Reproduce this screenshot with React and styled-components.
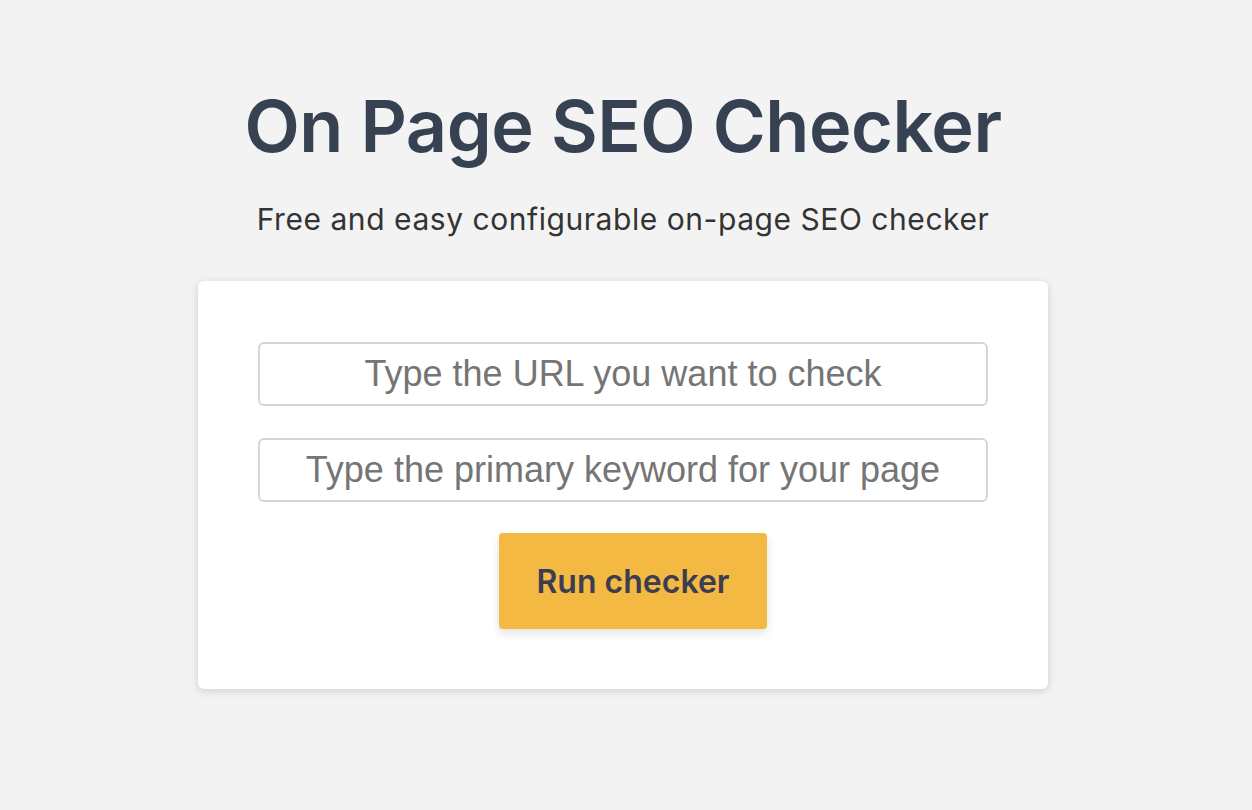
import React from "react";
import styled, { createGlobalStyle } from "styled-components";

const GlobalStyle = createGlobalStyle`
  html, body {
    margin: 0;
    padding: 0;
    background: #f3f3f3;
  }
  body {
    font-family: Inter, "Noto Sans", sans-serif;
  }
`;

const Page = styled.main`
  display: flex;
  flex-direction: column;
  align-items: center;
  padding: 82px 6px 0 0;
  min-height: 810px;
  box-sizing: border-box;
`;

const Title = styled.h1`
  margin: 0;
  font-size: 72px;
  font-weight: 600;
  color: #364152;
  letter-spacing: -0.5px;
`;

const Subtitle = styled.p`
  margin: 32px 0 0;
  font-size: 30px;
  font-weight: 400;
  letter-spacing: 0.55px;
  color: #333;
`;

const Card = styled.form`
  margin-top: 44px;
  width: 850px;
  box-sizing: border-box;
  padding: 61px 60px 60px;
  background: #fff;
  border-radius: 6px;
  box-shadow: 0 2px 8px rgba(0, 0, 0, 0.15);
  display: flex;
  flex-direction: column;
  align-items: center;
  gap: 32px;
`;

const Field = styled.input`
  width: 100%;
  height: 64px;
  box-sizing: border-box;
  border: 2px solid #d6d6d6;
  border-radius: 6px;
  font-family: "Liberation Sans", Arial, sans-serif;
  font-size: 36px;
  text-align: center;
  color: #333;
  outline: none;

  &::placeholder {
    color: #757575;
  }
`;

const RunButton = styled.button`
  margin: -1px 0 0 20px;
  width: 268px;
  height: 96px;
  border: none;
  border-radius: 4px;
  background: #f4b942;
  color: #3c3d50;
  font-family: Inter, "Noto Sans", sans-serif;
  font-size: 32px;
  font-weight: 600;
  cursor: pointer;
  box-shadow: 0 4px 10px rgba(0, 0, 0, 0.12);
`;

export default function App() {
  return (
    <>
      <GlobalStyle />
      <Page>
        <Title>On Page SEO Checker</Title>
        <Subtitle>Free and easy configurable on-page SEO checker</Subtitle>
        <Card onSubmit={(e) => e.preventDefault()}>
          <Field placeholder="Type the URL you want to check" />
          <Field placeholder="Type the primary keyword for your page" />
          <RunButton type="submit">Run checker</RunButton>
        </Card>
      </Page>
    </>
  );
}
